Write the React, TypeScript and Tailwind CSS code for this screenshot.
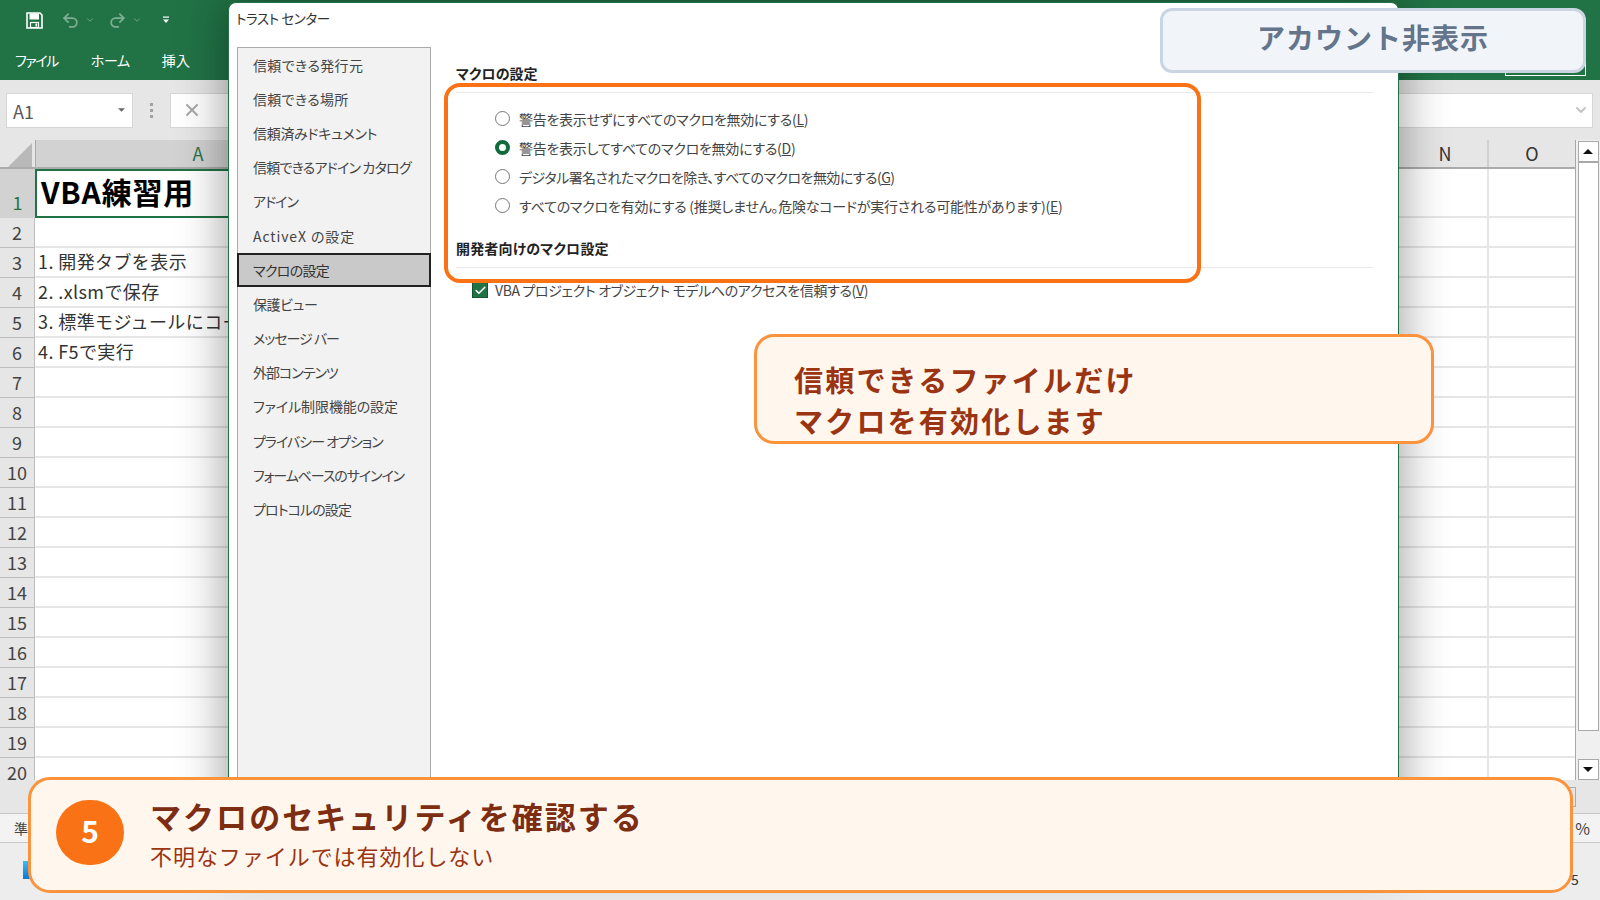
import { Check, ChevronDown, Redo2, Undo2, X } from "lucide-react";

const menuItems = [
  { label: "信頼できる発行元", cls: "tracking-[0.35px]" },
  { label: "信頼できる場所", cls: "tracking-[0.3px]" },
  { label: "信頼済みドキュメント", cls: "tracking-[-0.3px]" },
  { label: "信頼できるアドイン カタログ", cls: "tracking-[-0.8px]" },
  { label: "アドイン", cls: "tracking-[-1px]" },
  { label: "ActiveX の設定", cls: "tracking-[0.9px]" },
  { label: "マクロの設定", cls: "tracking-[-0.7px]" },
  { label: "保護ビュー", cls: "tracking-[-0.4px]" },
  { label: "メッセージ バー", cls: "tracking-[-1px]" },
  { label: "外部コンテンツ", cls: "tracking-[-1px]" },
  { label: "ファイル制限機能の設定", cls: "tracking-[-0.1px]" },
  { label: "プライバシー オプション", cls: "tracking-[-1px]" },
  { label: "フォームベースのサインイン", cls: "tracking-[-1.1px]" },
  { label: "プロトコルの設定", cls: "tracking-[-0.9px]" },
];

const macroOptions = [
  { label: "警告を表示せずにすべてのマクロを無効にする", key: "L", checked: false, cls: "tracking-[-0.3px]" },
  { label: "警告を表示してすべてのマクロを無効にする", key: "D", checked: true, cls: "tracking-[-0.27px]" },
  { label: "デジタル署名されたマクロを除き、すべてのマクロを無効にする", key: "G", checked: false, cls: "tracking-[-0.55px]" },
  { label: "すべてのマクロを有効にする (推奨しません。危険なコードが実行される可能性があります)", key: "E", checked: false, cls: "tracking-[-0.22px]" },
];

const rows: { n: number; text?: string }[] = [
  { n: 2 },
  { n: 3, text: "1. 開発タブを表示" },
  { n: 4, text: "2. .xlsmで保存" },
  { n: 5, text: "3. 標準モジュールにコードを貼り付ける" },
  { n: 6, text: "4. F5で実行" },
  ...[7, 8, 9, 10, 11, 12, 13, 14, 15, 16, 17, 18, 19, 20].map((n) => ({ n })),
];

const Ribbon = () => (
  <div className="h-[80px] bg-[#217346] text-white relative">
    <div className="h-[40px] flex items-center pl-[26px]">
      <svg viewBox="0 0 17 17" className="w-[17px] h-[17px]">
        <path d="M1 1h13l2 2v13H1z" fill="none" stroke="#fff" strokeWidth="1.6" />
        <rect x="3.5" y="1.5" width="9.5" height="6" fill="#fff" />
        <rect x="4.5" y="10.5" width="8" height="5" fill="none" stroke="#fff" strokeWidth="1.2" />
        <rect x="9.5" y="11.5" width="1.6" height="3" fill="#fff" />
      </svg>
      <Undo2 className="w-[19px] h-[19px] ml-[18px] text-[#7fae94]" strokeWidth={2.2} />
      <ChevronDown className="w-[10px] h-[10px] ml-[5px] text-[#7fae94]" />
      <Redo2 className="w-[19px] h-[19px] ml-[13px] text-[#7fae94]" strokeWidth={2.2} />
      <ChevronDown className="w-[10px] h-[10px] ml-[5px] text-[#7fae94]" />
      <svg viewBox="0 0 8 8" className="w-[8px] h-[8px] ml-[20px]">
        <rect x="1" y="0.5" width="6" height="1.2" fill="#fff" />
        <path d="M1 3.5h6L4 7z" fill="#fff" />
      </svg>
    </div>
    <div className="h-[40px] flex items-start pt-[9px] text-[14px] leading-[22px] [font-feature-settings:'palt']">
      <span className="ml-[15px] tracking-[-1.4px]">ファイル</span>
      <span className="ml-[33px] tracking-[-0.4px]">ホーム</span>
      <span className="ml-[32px] tracking-[0.3px]">挿入</span>
    </div>
    <div className="absolute left-[1505px] top-[40px] w-[81px] h-[36px] border border-white" />
  </div>
);

const FormulaBar = () => (
  <div className="h-[60px] bg-[#e6e6e6] flex items-center pl-[6px] pr-[7px]">
    <div className="w-[127px] h-[35px] bg-white border border-[#d6d6d6] flex items-center justify-between pl-[6px] pr-[7px]">
      <span className="text-[18px] text-[#555] leading-none pt-[2px]">A1</span>
      <svg viewBox="0 0 8 4" className="w-[7px] h-[4px]">
        <path d="M0 0h8L4 4z" fill="#666" />
      </svg>
    </div>
    <div className="w-[37px] flex flex-col items-center gap-[3px]">
      <div className="w-[3px] h-[3px] bg-[#a0a0a0]" />
      <div className="w-[3px] h-[3px] bg-[#a0a0a0]" />
      <div className="w-[3px] h-[3px] bg-[#a0a0a0]" />
    </div>
    <div className="flex-1 h-[35px] bg-white border border-[#d6d6d6] flex items-center justify-between pl-[11px] pr-[3px]">
      <X className="w-[20px] h-[20px] text-[#a8a8a8]" strokeWidth={2.4} />
      <ChevronDown className="w-[16px] h-[16px] text-[#c4c4c4]" strokeWidth={3} />
    </div>
  </div>
);

const ScrollArrow = ({ up }: { up?: boolean }) => (
  <div className="w-[21px] h-[21px] mx-auto bg-white border border-[#a8a8a8] flex items-center justify-center">
    <svg viewBox="0 0 10 5" className="w-[10px] h-[5px]">
      <path d={up ? "M0 5h10L5 0z" : "M0 0h10L5 5z"} fill="#111" />
    </svg>
  </div>
);

const Sheet = () => (
  <div className="h-[640px] flex overflow-hidden bg-white">
    <div className="w-[1576px] border-r border-[#a8a8a8] overflow-hidden">
      {/* column headers */}
      <div className="h-[29px] flex bg-[#e6e6e6] border-b-2 border-[#ababab]">
        <div className="w-[35px] relative">
          <svg viewBox="0 0 24 24" className="absolute right-[3px] bottom-[0px] w-[24px] h-[24px]">
            <path d="M24 0v24H0z" fill="#b9b9b9" />
          </svg>
        </div>
        <div className="w-[325px] bg-[#d2d2d2] border-l border-[#ababab] text-center text-[18px] leading-[27px] text-[#217346]">A</div>
        <div className="w-[1043px]" />
        <div className="w-[84px] text-center text-[18px] leading-[27px] text-[#333]">N</div>
        <div className="w-[88px] border-l-2 border-[#cfcfcf] text-center text-[18px] leading-[27px] text-[#333]">O</div>
      </div>
      {/* row 1 */}
      <div className="h-[49px] flex">
        <div className="w-[35px] bg-[#d2d2d2] text-center text-[18px] leading-[24px] pt-[21px] text-[#217346]">1</div>
        <div className="w-[325px] border-2 border-[#217346] pl-[4px] text-[30px] leading-[40px] font-bold tracking-[0.8px] text-black">VBA練習用</div>
        <div className="w-[1043px] border-b-2 border-[#e6e6e6]" />
        <div className="w-[84px] border-b-2 border-[#e6e6e6]" />
        <div className="w-[88px] border-l-2 border-b-2 border-[#e6e6e6]" />
      </div>
      {rows.map((r) => (
        <div key={r.n} className="h-[30px] flex">
          <div className="w-[35px] bg-[#e6e6e6] border-b border-[#bdbdbd] border-r text-center text-[18px] leading-[28px] text-[#444]">{r.n}</div>
          <div className="w-[1368px] border-b-2 border-[#e6e6e6] pl-[3px] text-[18px] leading-[27px] tracking-[0.4px] text-[#333] whitespace-nowrap overflow-hidden">{r.text}</div>
          <div className="w-[84px] border-b-2 border-[#e6e6e6]" />
          <div className="w-[88px] border-l-2 border-b-2 border-[#e6e6e6]" />
        </div>
      ))}
    </div>
    <div className="flex-1 bg-[#f0f0f0] flex flex-col pt-[1px]">
      <ScrollArrow up />
      <div className="w-[21px] h-[569px] mx-auto bg-white border border-[#a8a8a8]" />
      <div className="flex-1" />
      <ScrollArrow />
    </div>
  </div>
);

const Dialog = () => (
  <div className="absolute left-[228px] top-[2px] w-[1171px] h-[860px] bg-white border border-[#217346] rounded-t-[8px] shadow-[0_0_50px_rgba(0,0,0,0.42)] flex flex-col">
    <div className="h-[44px] shrink-0 pl-[7px] pt-[5px] text-[13.5px] leading-[20px] tracking-[-0.4px] text-[#333] [font-feature-settings:'palt']">トラスト センター</div>
    <div className="flex-1 flex [font-feature-settings:'palt']">
      <div className="w-[194px] ml-[8px] bg-[#f2f2f2] border border-[#ababab] shrink-0">
        {menuItems.map((item) =>
          item.label === "マクロの設定" ? (
            <div key={item.label} className={`h-[34.2px] flex items-center pl-[14px] -mx-px bg-[#c9c9c9] border-2 border-[#222] text-[14px] text-[#333] ${item.cls}`}>{item.label}</div>
          ) : (
            <div key={item.label} className={`h-[34.2px] flex items-center pl-[15px] text-[14px] text-[#444] ${item.cls}`}>{item.label}</div>
          )
        )}
      </div>
      <div className="flex-1 pl-[25px] pr-[25px] pt-[16px]">
        <h2 className="text-[14px] leading-[20px] font-bold text-[#222]">マクロの設定</h2>
        <div className="h-px bg-[#e8e8e8] mt-[9px]" />
        <div className="mt-[12px]">
          {macroOptions.map((o) => (
            <div key={o.key} className="h-[29px] flex items-center pl-[39px]">
              {o.checked ? (
                <div className="w-[15px] h-[15px] rounded-full border-[4px] border-[#0f6b3a] bg-white -mt-[3px]" />
              ) : (
                <div className="w-[15px] h-[15px] rounded-full border border-[#777] bg-white -mt-[3px]" />
              )}
              <span className={`ml-[9px] text-[14px] text-[#444] whitespace-nowrap ${o.cls}`}>
                {o.label}(<u>{o.key}</u>)
              </span>
            </div>
          ))}
        </div>
        <h2 className="mt-[17px] text-[14px] leading-[20px] font-bold tracking-[0.15px] text-[#222]">開発者向けのマクロ設定</h2>
        <div className="h-px bg-[#e8e8e8] mt-[9px]" />
        <div className="mt-[12px] h-[20px] flex items-center pl-[16px]">
          <div className="w-[16px] h-[16px] bg-[#217346] border border-[#14532d] flex items-center justify-center">
            <Check className="w-[13px] h-[13px] text-white" strokeWidth={3} />
          </div>
          <span className="ml-[7px] text-[14px] text-[#444] whitespace-nowrap tracking-[-0.36px]">
            VBA プロジェクト オブジェクト モデルへのアクセスを信頼する(<u>V</u>)
          </span>
        </div>
      </div>
    </div>
  </div>
);

export default function App() {
  return (
    <div className="relative w-[1600px] h-[900px] overflow-hidden bg-[#ededed] font-['Noto_Sans_CJK_JP','Liberation_Sans',sans-serif]">
      <Ribbon />
      <FormulaBar />
      <Sheet />
      <div className="h-[33px] bg-[#e6e6e6] flex justify-end items-center">
        <div className="w-[10px] h-[20px] border border-[#ababab] mr-[24px]" />
      </div>
      <div className="h-[30px] bg-[#f3f3f3] border-y border-[#c8c8c8] flex items-center justify-between pl-[14px] pr-[10px] text-[14px] text-[#444]">
        <span>準備完了</span>
        <span className="text-[16px]">%</span>
      </div>
      <div className="h-[57px] relative">
        <div className="absolute left-[23px] top-[18px] w-[16px] h-[18px] bg-gradient-to-b from-[#38bdf8] to-[#0b78d0]" />
        <span className="absolute left-[1571px] top-[26px] text-[14px] leading-[20px] text-[#333]">5</span>
      </div>

      <Dialog />

      {/* annotations */}
      <div className="absolute left-[444px] top-[83px] w-[757px] h-[200px] rounded-[16px] border-[4px] border-[#f97316]" />

      <div className="absolute left-[1160px] top-[8px] w-[426px] h-[65px] rounded-[12px] bg-[#f1f5f9] border-[3px] border-[#cbd5e1] flex items-center justify-center pb-[8px] text-[28px] font-bold tracking-[1px] text-[#64748b]">
        アカウント非表示
      </div>

      <div className="absolute left-[754px] top-[334px] w-[680px] h-[110px] rounded-[20px] bg-[#fff7ed] border-[3px] border-[#fb923c] pl-[37px] pt-[22px] text-[29px] leading-[41px] font-bold tracking-[2.2px] text-[#9a3412]">
        <div>信頼できるファイルだけ</div>
        <div>マクロを有効化します</div>
      </div>

      <div className="absolute left-[28px] top-[777px] w-[1545px] h-[116px] rounded-[22px] bg-[#fff7ed] border-[3px] border-[#fb923c] flex items-center pl-[25px] pb-[6px]">
        <div className="w-[68px] h-[65px] rounded-full bg-[#f97316] flex items-center justify-center text-[30px] font-bold text-white shrink-0 pb-[3px]">5</div>
        <div className="ml-[26px]">
          <div className="text-[31px] leading-[40px] font-bold tracking-[2.05px] text-[#7c2d12]">マクロのセキュリティを確認する</div>
          <div className="mt-[5px] text-[22px] leading-[28px] tracking-[0.95px] text-[#9a3412]">不明なファイルでは有効化しない</div>
        </div>
      </div>
    </div>
  );
}
